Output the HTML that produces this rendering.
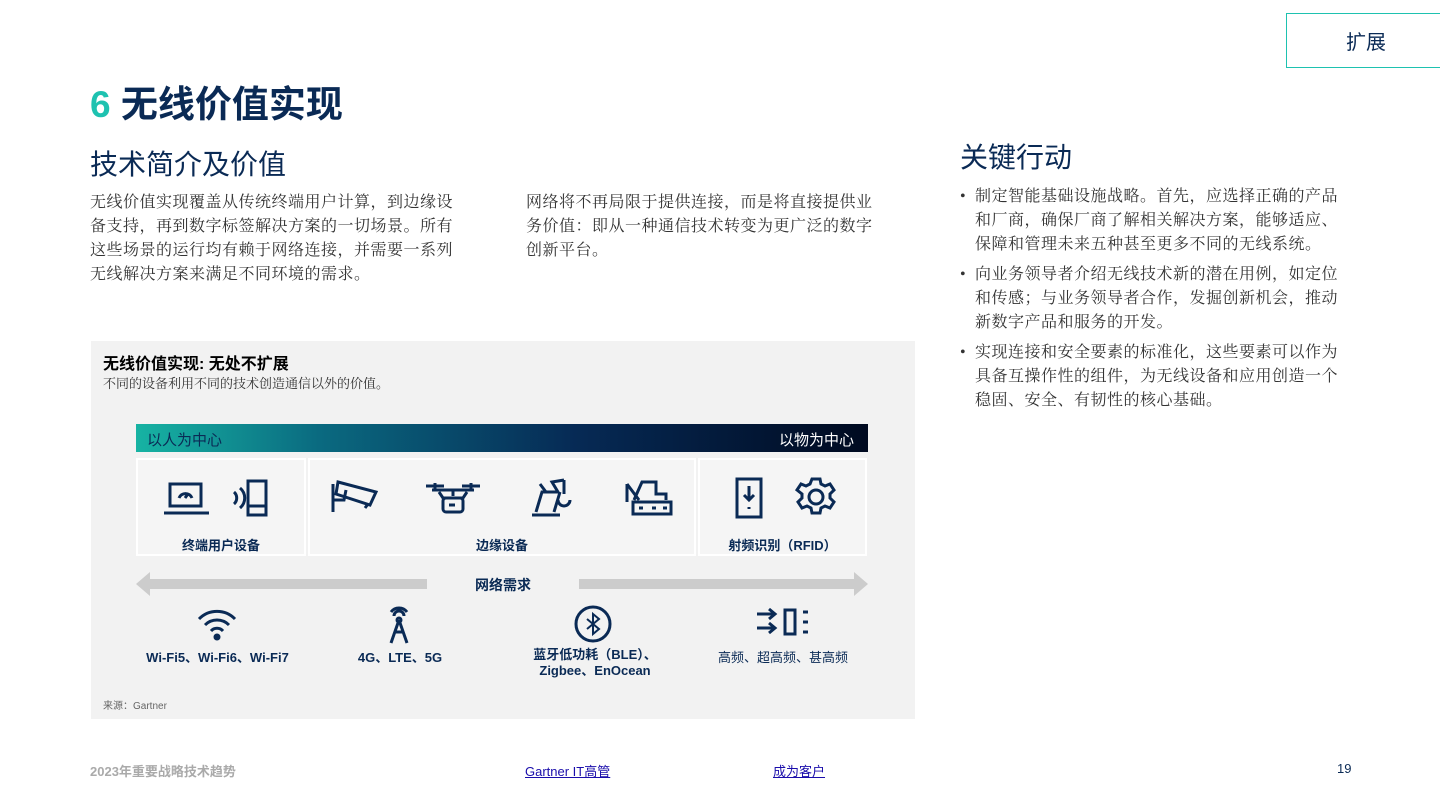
<!DOCTYPE html>
<html><head><meta charset="utf-8"><style>
*{margin:0;padding:0;box-sizing:border-box}
body{width:1440px;height:810px;background:#fff;position:relative;overflow:hidden;font-family:"Liberation Sans","Noto Sans CJK SC",sans-serif;color:#333}
.a{position:absolute}
.serif{font-family:"Liberation Serif","Noto Serif CJK SC",serif}
.navy{color:#0a2a55}
.p{font-size:16px;line-height:24px;color:#333;letter-spacing:0.5px}
.lbl{font-size:13px;font-weight:bold;color:#0a2a55;text-align:center}
svg{position:absolute;fill:none;stroke:#0a2a55;stroke-width:3}
ul{list-style:none}
li{position:relative;padding-left:15px;margin-bottom:6px}
li:before{content:"•";position:absolute;left:0}
</style></head><body>
<div class="a" style="left:1286px;top:13px;width:160px;height:55px;border:1px solid #1ec2b0;display:flex;align-items:center;justify-content:center;font-size:20px;color:#0a2a55">扩展</div>
<div class="a navy" style="left:90px;top:84px;font-size:37px;font-weight:bold;line-height:42px"><span style="color:#1ec2b0">6</span> 无线价值实现</div>
<div class="a navy" style="left:90px;top:148px;font-size:28px;line-height:34px">技术简介及价值</div>
<div class="a p serif" style="left:90px;top:191px;width:372px">无线价值实现覆盖从传统终端用户计算，到边缘设备支持，再到数字标签解决方案的一切场景。所有这些场景的运行均有赖于网络连接，并需要一系列无线解决方案来满足不同环境的需求。</div>
<div class="a p serif" style="left:526px;top:191px;width:355px">网络将不再局限于提供连接，而是将直接提供业务价值：即从一种通信技术转变为更广泛的数字创新平台。</div>
<div class="a navy" style="left:960px;top:141px;font-size:28px;line-height:34px">关键行动</div>
<ul class="a p serif" style="left:960px;top:185px;width:388px">
<li>制定智能基础设施战略。首先，应选择正确的产品和厂商，确保厂商了解相关解决方案，能够适应、保障和管理未来五种甚至更多不同的无线系统。</li>
<li>向业务领导者介绍无线技术新的潜在用例，如定位和传感；与业务领导者合作，发掘创新机会，推动新数字产品和服务的开发。</li>
<li>实现连接和安全要素的标准化，这些要素可以作为具备互操作性的组件，为无线设备和应用创造一个稳固、安全、有韧性的核心基础。</li>
</ul>
<div class="a" style="left:91px;top:341px;width:824px;height:378px;background:#f2f2f2"></div>
<div class="a" style="left:103px;top:350px;font-size:16px;font-weight:bold;color:#000">无线价值实现: 无处不扩展</div>
<div class="a serif" style="left:103px;top:373px;font-size:13px;color:#333">不同的设备利用不同的技术创造通信以外的价值。</div>
<div class="a" style="left:136px;top:424px;width:732px;height:28px;background:linear-gradient(90deg,#17b3a3,#0a6a80 25%,#062a55 60%,#000a20)"></div>
<div class="a" style="left:147px;top:429px;font-size:15px;color:#0a2a55">以人为中心</div>
<div class="a" style="left:779px;top:429px;font-size:15px;color:#fff">以物为中心</div>
<div class="a" style="left:136px;top:458px;width:170px;height:98px;background:#f5f5f5;border:2px solid #fff"></div>
<div class="a" style="left:308px;top:458px;width:388px;height:98px;background:#f5f5f5;border:2px solid #fff"></div>
<div class="a" style="left:698px;top:458px;width:169px;height:98px;background:#f5f5f5;border:2px solid #fff"></div>
<div class="a lbl" style="left:136px;top:535px;width:170px">终端用户设备</div>
<div class="a lbl" style="left:308px;top:535px;width:388px">边缘设备</div>
<div class="a lbl" style="left:698px;top:535px;width:169px">射频识别（RFID）</div>
<svg style="left:164px;top:480px" width="45" height="36"><rect x="6" y="4" width="31" height="22"/><path d="M0 33H45M15 18a7 7 0 0 1 13 0M21 18l3-4"/></svg>
<svg style="left:228px;top:478px" width="44" height="40"><path d="M6 14a8 8 0 0 1 0 12M12 10a13 13 0 0 1 0 20"/><rect x="20" y="3" width="18" height="34"/><path d="M20 28H38"/></svg>
<svg style="left:330px;top:480px" width="48" height="34"><path d="M3 4V32M3 20H14L16 10M8 2L46 12L40 25L6 14ZM38 24l-3 4"/></svg>
<svg style="left:424px;top:480px" width="58" height="36"><path d="M2 6H20M38 6H56M11 3V9M47 3V9M8 10H50M29 10V16M15 12l4 6H39l4-6"/><rect x="19" y="18" width="20" height="14" rx="3"/><path d="M25 25H31"/></svg>
<svg style="left:530px;top:478px" width="42" height="40"><path d="M2 37H30M6 34L12 14H28L22 4l12-2M10 6l6 8M30 14l-6 20M34 2v14M28 22a6 6 0 1 0 12 0"/></svg>
<svg style="left:624px;top:478px" width="50" height="40"><path d="M3 6V24M3 6l12 16M10 22L18 4H32V16H42V22M9 24H47v12H9z"/><path d="M15 30H19M28 30H32M39 30H43"/></svg>
<svg style="left:734px;top:476px" width="30" height="44"><rect x="3" y="3" width="24" height="38"/><path d="M15 10V24M10 19l5 5 5-5M15 31v2"/></svg>
<svg style="left:794px;top:476px" width="44" height="42"><circle cx="22" cy="21" r="7"/><path d="M18 3h8l1 5 4 2 5-2 4 6-4 4v4l4 4-4 6-5-2-4 2-1 5h-8l-1-5-4-2-5 2-4-6 4-4v-4L3 14l4-6 5 2 4-2z"/></svg>
<div class="a" style="left:150px;top:579px;width:277px;height:10px;background:#ccc"></div>
<div class="a" style="left:136px;top:572px;width:0;height:0;border-top:12px solid transparent;border-bottom:12px solid transparent;border-right:14px solid #ccc"></div>
<div class="a" style="left:579px;top:579px;width:275px;height:10px;background:#ccc"></div>
<div class="a" style="left:854px;top:572px;width:0;height:0;border-top:12px solid transparent;border-bottom:12px solid transparent;border-left:14px solid #ccc"></div>
<div class="a lbl" style="left:440px;top:575px;width:126px;font-size:14px">网络需求</div>
<svg style="left:196px;top:607px" width="42" height="34"><path d="M3 12a25 25 0 0 1 36 0M9 18a17 17 0 0 1 24 0M15 24a8 8 0 0 1 12 0"/><circle cx="21" cy="30" r="2" fill="#0a2a55"/></svg>
<svg style="left:385px;top:604px" width="28" height="40"><path d="M6 8a10 10 0 0 1 16 0M9 12a5 5 0 0 1 10 0M14 16L6 39M14 16L22 39M10 28H18"/><circle cx="14" cy="16" r="2"/></svg>
<svg style="left:573px;top:604px" width="40" height="40"><circle cx="20" cy="20" r="17"/><path d="M14 15l12 10-6 5V10l6 5-12 10" stroke-width="2"/></svg>
<svg style="left:755px;top:606px" width="56" height="32"><path d="M2 8H20M14 3l6 5-6 5M2 22H20M14 17l6 5-6 5M30 4H40V28H30ZM48 6h5M48 16h5M48 26h5"/></svg>
<div class="a lbl" style="left:120px;top:647px;width:195px">Wi-Fi5、Wi-Fi6、Wi-Fi7</div>
<div class="a lbl" style="left:330px;top:647px;width:140px">4G、LTE、5G</div>
<div class="a lbl" style="left:510px;top:647px;width:170px;line-height:16px">蓝牙低功耗（BLE）、<br>Zigbee、EnOcean</div>
<div class="a lbl" style="left:700px;top:647px;width:166px;font-weight:normal">高频、超高频、甚高频</div>
<div class="a" style="left:103px;top:697px;font-size:10px;color:#666">来源：Gartner</div>
<div class="a" style="left:90px;top:761px;font-size:13px;color:#aaa;font-weight:bold">2023年重要战略技术趋势</div>
<div class="a" style="left:525px;top:761px;font-size:13px;color:#1a0dab;text-decoration:underline">Gartner IT高管</div>
<div class="a" style="left:773px;top:761px;font-size:13px;color:#1a0dab;text-decoration:underline">成为客户</div>
<div class="a" style="left:1337px;top:761px;font-size:13px;color:#0a2a55">19</div>
</body></html>
